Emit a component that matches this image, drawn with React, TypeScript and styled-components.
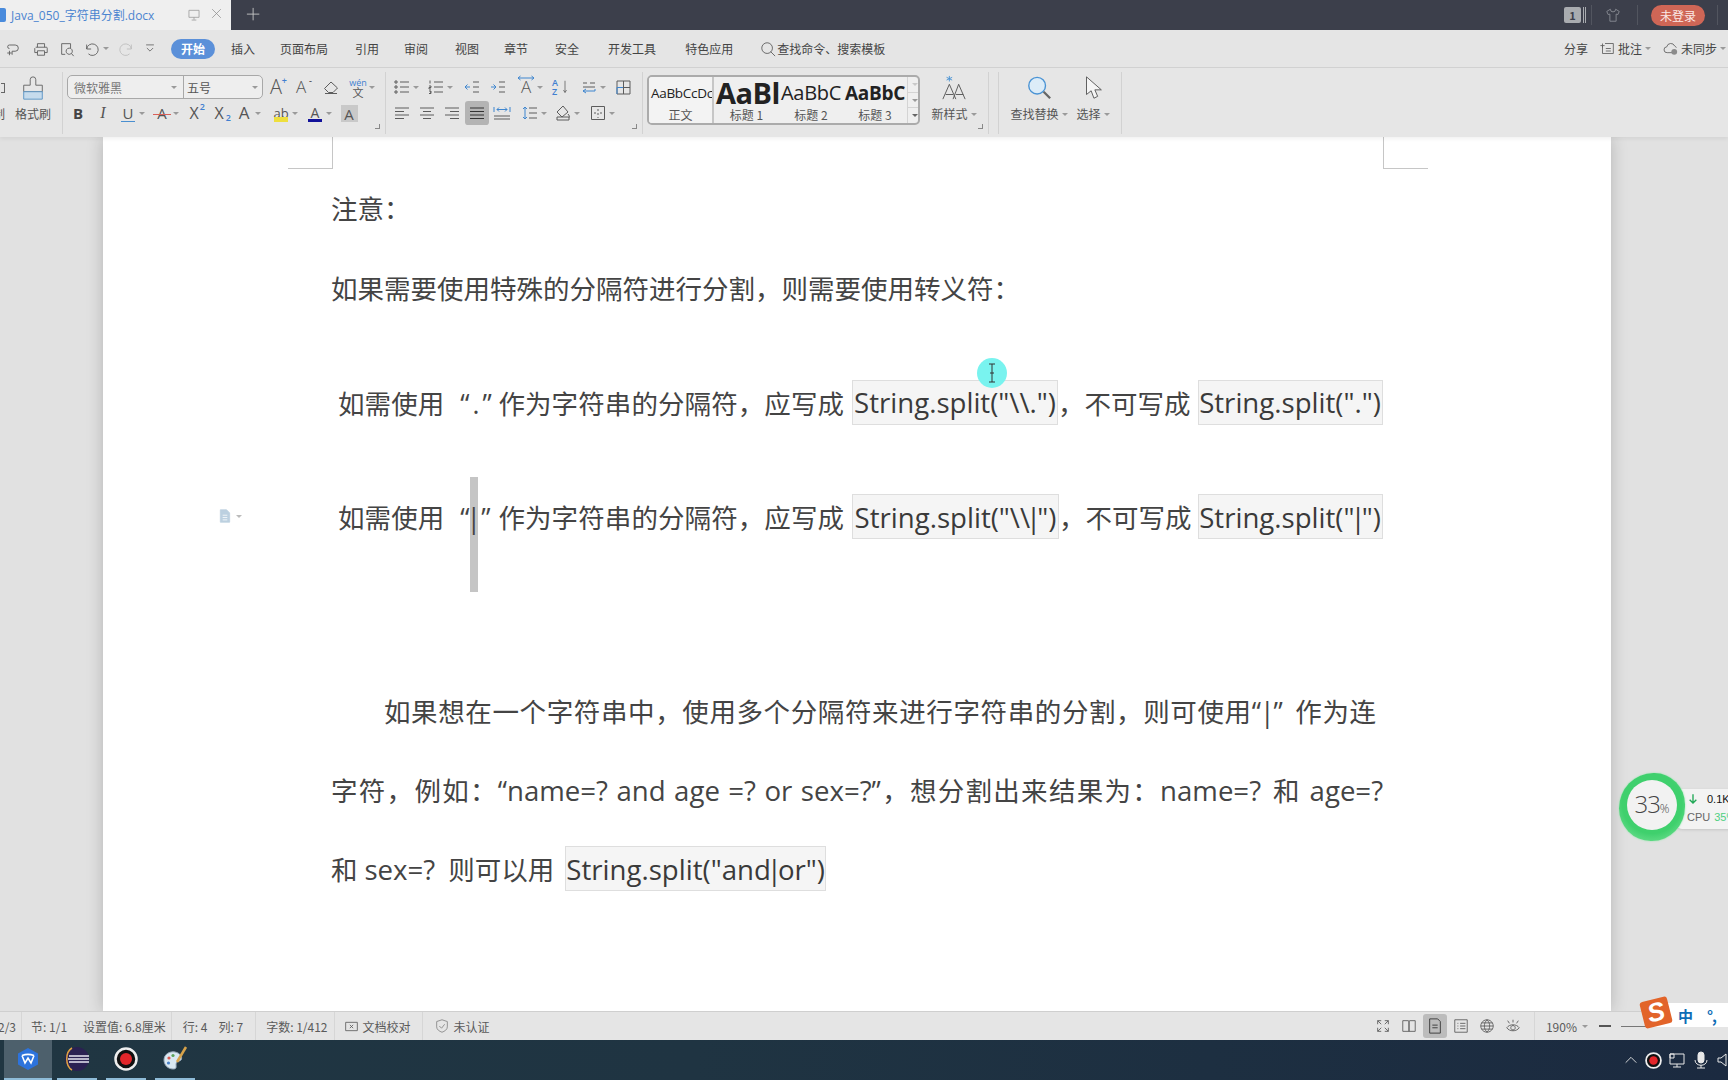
import React from 'react';
import styled, { createGlobalStyle } from 'styled-components';

const uiFont = '"Noto Sans CJK SC", "Noto Sans", sans-serif';
const docFont = '"Open Sans", "Noto Sans CJK SC", sans-serif';

const COMMA = '\uFF0C';
const COLON = '\uFF1A';

const GlobalStyle = createGlobalStyle`
  html, body { margin: 0; padding: 0; background: #e1e1e1; }
  * { box-sizing: border-box; }
`;

const Root = styled.div`
  position: relative;
  width: 1728px;
  height: 1080px;
  overflow: hidden;
  display: flex;
  flex-direction: column;
  font-family: ${uiFont};
  font-size: 12px;
  color: #444;
`;

/* title bar */
const TitleBar = styled.div`
  height: 30px;
  flex: none;
  display: flex;
  align-items: center;
  background: #3c3f4b;
`;
const DocTab = styled.div`
  width: 231px;
  height: 30px;
  display: flex;
  align-items: center;
  background: #efefef;
  color: #4b84d0;
`;
const DocBadge = styled.div`
  width: 6px;
  height: 14px;
  background: #4a8bdc;
  border-radius: 0 2px 2px 0;
`;
const DocName = styled.span`
  margin-left: 5px;
  width: 176px;
  font-family: "Open Sans", "Noto Sans CJK SC", sans-serif;
  white-space: nowrap;
`;
const PlusBtn = styled.div`
  margin-left: 15px;
  width: 16px;
  height: 16px;
  display: flex;
`;
const TitleRight = styled.div`
  margin-left: auto;
  display: flex;
  align-items: center;
  padding-right: 10px;
`;
const CountBadge = styled.div`
  width: 17px;
  height: 16px;
  border-radius: 2px;
  background: #a9acb0;
  color: #3c3f4b;
  font-size: 11px;
  font-weight: 700;
  line-height: 16px;
  text-align: center;
`;
const BadgeEdge = styled.div`
  margin-left: 2px;
  width: 3px;
  height: 16px;
  border-left: 1px solid #a9acb0;
  border-right: 1px solid #a9acb0;
`;
const TitleSep = styled.div<{ $ml: number }>`
  margin-left: ${p => p.$ml}px;
  width: 1px;
  height: 20px;
  background: #52555f;
`;
const LoginPill = styled.div`
  margin-left: 13px;
  width: 54px;
  height: 21px;
  border-radius: 11px;
  background: #cf6656;
  color: #fbe9e6;
  font-size: 12px;
  line-height: 21px;
  text-align: center;
`;

/* menu bar */
const MenuBar = styled.div`
  height: 38px;
  flex: none;
  display: flex;
  align-items: center;
  background: #e5e5e5;
  border-bottom: 1px solid #d2d2d2;
  white-space: nowrap;
`;
const QuickIcon = styled.div<{ $ml: number }>`
  margin-left: ${p => p.$ml}px;
  width: 16px;
  height: 16px;
  display: flex;
`;
const ActivePill = styled.div`
  margin-left: 12px;
  width: 44px;
  height: 20px;
  border-radius: 10px;
  background: #5b90d9;
  color: #fff;
  font-weight: 700;
  line-height: 20px;
  text-align: center;
`;
const MenuTab = styled.span<{ $ml: number }>`
  margin-left: ${p => p.$ml}px;
  color: #444;
`;
const MenuRight = styled.div`
  margin-left: auto;
  display: flex;
  align-items: center;
  padding-right: 2px;
`;
const MenuAction = styled.span<{ $ml?: number }>`
  margin-left: ${p => p.$ml ?? 0}px;
  display: inline-flex;
  align-items: center;
  gap: 3px;
`;

/* ribbon */
const Ribbon = styled.div`
  height: 69px;
  flex: none;
  display: flex;
  background: #e6e6e6;
  position: relative;
  z-index: 2;
  box-shadow: 0 2px 4px rgba(0, 0, 0, 0.06);
`;
const Group = styled.div<{ $w: number; $sep?: boolean }>`
  position: relative;
  width: ${p => p.$w}px;
  flex: none;
  padding-top: 7px;
  display: flex;
  flex-direction: column;
  gap: 2px;
  &::after {
    content: '';
    display: ${p => (p.$sep === false ? 'none' : 'block')};
    position: absolute;
    right: 0;
    top: 4px;
    bottom: 3px;
    width: 1px;
    background: #d2d2d2;
  }
`;
const ToolRow = styled.div`
  height: 24px;
  display: flex;
  align-items: center;
`;
const Tool = styled.div<{ $ml: number; $active?: boolean }>`
  margin-left: ${p => p.$ml}px;
  width: 18px;
  height: 18px;
  flex: none;
  display: flex;
  align-items: center;
  justify-content: center;
  position: relative;
  border-radius: 1px;
  ${p => p.$active && 'background: #b4b4b4; box-shadow: 0 0 0 3px #b4b4b4;'}
`;
const OverIcon = styled.div`
  position: absolute;
  left: 0;
  top: -5px;
`;
const Caret = styled.i<{ $ml?: number; $c?: string }>`
  flex: none;
  display: block;
  margin-left: ${p => p.$ml ?? 0}px;
  width: 0;
  height: 0;
  border-left: 3px solid transparent;
  border-right: 3px solid transparent;
  border-top: 3px solid ${p => p.$c ?? '#9a9a9a'};
`;
const LetterGlyph = styled.span<{ $size?: number; $color?: string; $weight?: number; $italic?: boolean; $font?: string }>`
  font-family: ${p => p.$font ?? '"Open Sans", sans-serif'};
  font-size: ${p => p.$size ?? 17}px;
  font-weight: ${p => p.$weight ?? 400};
  font-style: ${p => (p.$italic ? 'italic' : 'normal')};
  color: ${p => p.$color ?? '#555'};
  line-height: 18px;
`;
const SupMark = styled.span<{ $sub?: boolean; $color?: string }>`
  position: absolute;
  right: ${p => (p.$sub ? -3 : -2)}px;
  top: ${p => (p.$sub ? 9 : -2)}px;
  font-size: 9px;
  line-height: 10px;
  color: ${p => p.$color ?? '#3f7fd0'};
  font-family: "Open Sans", sans-serif;
  font-weight: 600;
`;
const Underlined = styled.span<{ $color: string; $h: number }>`
  position: absolute;
  left: 2px;
  right: 2px;
  bottom: 0;
  height: ${p => p.$h}px;
  background: ${p => p.$color};
`;
const StrikeLine = styled.span`
  position: absolute;
  left: 0;
  right: 0;
  top: 10px;
  height: 1px;
  background: #d9605a;
`;
const GrayA = styled.div`
  width: 17px;
  height: 17px;
  background: #c9c9c9;
  text-align: center;
  line-height: 16px;
`;
const PinyinWrap = styled.div`
  display: flex;
  flex-direction: column;
  align-items: center;
  line-height: 9px;
`;
const PinyinTop = styled.span`
  font-family: "Open Sans", sans-serif;
  font-size: 9px;
  line-height: 9px;
  color: #3f7fd0;
`;
const PinyinBottom = styled.span`
  font-size: 11px;
  line-height: 10px;
  color: #555;
`;
const SortStack = styled.div`
  display: flex;
  flex-direction: column;
  width: 9px;
  font-family: "Open Sans", sans-serif;
  font-size: 9px;
  font-weight: 600;
  line-height: 9px;
  color: #3f7fd0;
`;
const FontBox = styled.div`
  margin-left: 4px;
  width: 196px;
  height: 24px;
  border: 1px solid #a8a8a8;
  border-radius: 5px;
  background: #eeeeee;
  display: flex;
  align-items: center;
`;
const FontName = styled.div`
  width: 116px;
  height: 100%;
  padding: 0 6px;
  display: flex;
  align-items: center;
  justify-content: space-between;
  border-right: 1px solid #a8a8a8;
  color: #777;
`;
const FontSize = styled.div`
  flex: 1;
  padding: 0 4px 0 3px;
  display: flex;
  align-items: center;
  justify-content: space-between;
  color: #555;
`;
const Launcher = styled.i`
  position: absolute;
  right: 6px;
  bottom: 8px;
  width: 5px;
  height: 5px;
  border-right: 1px solid #888;
  border-bottom: 1px solid #888;
`;
const BigTools = styled.div`
  display: flex;
  height: 100%;
`;
const BigTool = styled.div<{ $w: number; $ml?: number }>`
  width: ${p => p.$w}px;
  margin-left: ${p => p.$ml ?? 0}px;
  flex: none;
  display: flex;
  flex-direction: column;
  align-items: center;
  color: #555;
  white-space: nowrap;
`;
const BigIcon = styled.div`
  height: 26px;
  display: flex;
  align-items: center;
  justify-content: center;
`;
const BigLabel = styled.div`
  margin-top: 4px;
  height: 18px;
  line-height: 18px;
  display: flex;
  align-items: center;
  gap: 3px;
`;
const ClippedLeft = styled.div`
  width: 5px;
  flex: none;
  overflow: hidden;
  display: flex;
  flex-direction: column;
  align-items: flex-end;
  color: #555;
  white-space: nowrap;
`;
const ClippedIcon = styled.i`
  display: block;
  width: 4px;
  height: 10px;
  margin: 8px 0 8px;
  border: 1px solid #666;
  border-left: none;
`;
const ClippedWord = styled.span`
  margin-top: 4px;
  line-height: 18px;
`;
const Gallery = styled.div`
  margin-left: 4px;
  width: 273px;
  height: 50px;
  flex: none;
  border: 2px solid #ababab;
  border-radius: 5px;
  background: #efefef;
  display: flex;
  overflow: hidden;
`;
const StyleCard = styled.div<{ $w: number; $active?: boolean }>`
  width: ${p => p.$w}px;
  flex: none;
  display: flex;
  flex-direction: column;
  align-items: center;
  overflow: hidden;
  background: ${p => (p.$active ? '#f3f3f3' : 'transparent')};
  ${p => p.$active && 'border-right: 2px solid #c6c6c6;'}
`;
const StylePreview = styled.div<{ $size: number; $bold?: boolean }>`
  height: 28px;
  margin-top: 2px;
  width: 100%;
  overflow: hidden;
  font-family: "Open Sans", sans-serif;
  font-size: ${p => p.$size}px;
  font-weight: ${p => (p.$bold ? 700 : 400)};
  line-height: 28px;
  color: #222;
  white-space: nowrap;
  text-align: left;
  padding-left: 2px;
  letter-spacing: ${p => (p.$size > 20 ? -0.5 : -0.3)}px;
`;
const StyleName = styled.div`
  font-size: 12px;
  line-height: 16px;
  color: #555;
`;
const GalleryScroll = styled.div`
  margin-left: auto;
  width: 14px;
  flex: none;
  display: flex;
  flex-direction: column;
  border-left: 1px solid #d4d4d4;
`;
const ScrollBtn = styled.div`
  flex: 1;
  display: flex;
  align-items: center;
  justify-content: center;
  border-bottom: 1px solid #d4d4d4;
  &:last-child { border-bottom: none; }
`;

/* document */
const DocArea = styled.div`
  flex: 1;
  min-height: 0;
  background: #e1e1e1;
  padding-left: 103px;
`;
const Page = styled.div`
  position: relative;
  width: 1508px;
  height: 100%;
  padding: 30px 0 0 228px;
  background: #fff;
  box-shadow: 0 0 16px rgba(0, 0, 0, 0.2);
  font-family: ${docFont};
  font-size: 26.5px;
  color: #444;
  clip-path: inset(0 -30px 0 -30px);
`;
const CropMark = styled.div<{ $side: 'left' | 'right' }>`
  position: absolute;
  top: 0;
  left: ${p => (p.$side === 'left' ? 185 : 1280)}px;
  width: 45px;
  height: 32px;
  border-bottom: 1px solid #c6c6c6;
  ${p => (p.$side === 'left' ? 'border-right' : 'border-left')}: 1px solid #c6c6c6;
`;
const Line = styled.div<{ $h: number; $mt?: number; $indent?: number }>`
  position: relative;
  isolation: isolate;
  width: 1052px;
  height: ${p => p.$h}px;
  margin-top: ${p => p.$mt ?? 0}px;
  padding-left: ${p => p.$indent ?? 0}px;
  display: flex;
  align-items: center;
  white-space: nowrap;
`;
const Code = styled.span<{ $w: number; $ml?: number }>`
  flex: none;
  display: inline-flex;
  align-items: center;
  justify-content: center;
  width: ${p => p.$w}px;
  height: 45px;
  margin-left: ${p => p.$ml ?? 0}px;
  background: #f5f5f5;
  border: 1px solid #dedede;
  color: #3a3a3a;
  font-size: 27.6px;
`;
const Spaced = styled.span<{ $ml?: number; $w?: number }>`
  flex: none;
  margin-left: ${p => p.$ml ?? 0}px;
  ${p => p.$w && `width: ${p.$w}px; text-align: justify; text-align-last: justify;`}
`;
const Latin = styled.span`
  font-size: 27.6px;
`;
const SpacedWord = styled.span`
  display: inline-block;
  margin: 0 10px 0 12px;
`;
const Quoted = styled.span<{ $w?: number; $ml?: number }>`
  display: inline-block;
  width: ${p => p.$w ?? 38}px;
  margin: 0 0 0 ${p => p.$ml ?? 16}px;
  text-align: left;
  text-align-last: left;
  letter-spacing: 3px;
`;
const Pipe = styled.span`
  display: inline-block;
  margin: 0 -4px;
`;
const CaretMark = styled.span`
  position: relative;
  display: inline-block;
  margin: 0 -3px 0 -6px;
  &::before {
    content: '';
    position: absolute;
    z-index: -1;
    left: 3px;
    top: -23px;
    width: 8px;
    height: 115px;
    background: #c5c5c5;
  }
`;
const ParaIcon = styled.div`
  position: absolute;
  left: 115px;
  top: 372px;
  display: flex;
  align-items: center;
  gap: 4px;
`;

/* status bar */
const StatusBar = styled.div`
  height: 29px;
  flex: none;
  position: relative;
  display: flex;
  align-items: center;
  background: #e5e5e5;
  border-top: 1px solid #cfcfcf;
  color: #5a5a5a;
  white-space: nowrap;
`;
const StatusText = styled.span<{ $ml?: number }>`
  margin-left: ${p => p.$ml ?? 0}px;
  display: inline-flex;
  align-items: center;
  gap: 4px;
`;
const StatusSep = styled.i<{ $ml: number }>`
  margin-left: ${p => p.$ml}px;
  width: 1px;
  height: 28px;
  background: #d6d6d6;
`;
const ClipStart = styled.div`
  width: 16px;
  overflow: hidden;
  display: flex;
  justify-content: flex-end;
`;
const StatusRight = styled.div`
  margin-left: auto;
  display: flex;
  align-items: center;
`;
const ViewBtn = styled.div<{ $ml: number; $active?: boolean }>`
  margin-left: ${p => p.$ml}px;
  width: 24px;
  height: 24px;
  border-radius: 3px;
  display: flex;
  align-items: center;
  justify-content: center;
  background: ${p => (p.$active ? '#bcbcbc' : 'transparent')};
`;
const ZoomMinus = styled.i`
  margin-left: 11px;
  width: 12px;
  height: 2px;
  background: #555;
`;
const ZoomTrack = styled.i`
  margin-left: 10px;
  width: 107px;
  height: 1px;
  background: #777;
`;

/* taskbar */
const TaskBar = styled.div`
  height: 40px;
  flex: none;
  display: flex;
  align-items: center;
  background: linear-gradient(90deg, #203642 0%, #1f3442 40%, #1b2a40 100%);
`;
const TaskItem = styled.div<{ $w: number; $ml: number; $active?: boolean }>`
  width: ${p => p.$w}px;
  margin-left: ${p => p.$ml}px;
  height: 40px;
  display: flex;
  align-items: center;
  justify-content: center;
  background: ${p => (p.$active ? '#4d606c' : 'transparent')};
  border-bottom: 2px solid #8fbcd8;
`;
const Tray = styled.div`
  margin-left: auto;
  margin-right: -6px;
  display: flex;
  align-items: center;
  gap: 6px;
`;

/* floating things */
const CursorHalo = styled.div`
  position: absolute;
  left: 977px;
  top: 358px;
  width: 30px;
  height: 30px;
  border-radius: 50%;
  background: #79f3ef;
  display: flex;
  align-items: center;
  justify-content: center;
  z-index: 5;
`;
const Meter = styled.div`
  position: absolute;
  left: 1619px;
  top: 773px;
  z-index: 5;
  width: 66px;
  height: 68px;
  border-radius: 52% 46% 50% 48%;
  background: radial-gradient(circle at 50% 45%, #3fd06d 60%, #8ae8a5 100%);
  box-shadow: 0 0 2px #8ae8a5;
  display: flex;
  align-items: center;
  justify-content: center;
`;
const MeterFace = styled.div`
  width: 50px;
  height: 50px;
  margin-top: -4px;
  border-radius: 50%;
  background: #f2f2f2;
  color: #444;
  font-size: 24px;
  letter-spacing: -1px;
  font-family: "Open Sans", sans-serif;
  font-weight: 300;
  display: flex;
  align-items: baseline;
  justify-content: center;
  line-height: 48px;
`;
const MeterPct = styled.span`
  font-size: 12px;
  letter-spacing: 0;
`;
const MeterPanel = styled.div`
  position: absolute;
  left: 1676px;
  top: 789px;
  z-index: 4;
  width: 70px;
  height: 40px;
  border-radius: 6px;
  background: #f3f3f3;
  box-shadow: 0 1px 3px rgba(0, 0, 0, 0.12);
  padding: 1px 0 0 11px;
  font-family: "Liberation Sans", sans-serif;
  font-size: 11px;
  line-height: 18px;
  color: #666;
  white-space: nowrap;
`;
const MeterRow = styled.div`
  display: flex;
  align-items: center;
`;
const NetValue = styled.span`
  margin-left: 8px;
  color: #111;
`;
const CpuValue = styled.span`
  margin-left: 4px;
  color: #4fd081;
`;
const ImeBar = styled.div`
  position: absolute;
  left: 1654px;
  top: 1003px;
  z-index: 6;
  width: 74px;
  height: 24px;
  background: #fff;
  display: flex;
  align-items: center;
  padding-left: 24px;
  color: #0e6db6;
`;
const ImeLogo = styled.div`
  position: absolute;
  left: 1642px;
  top: 999px;
  z-index: 7;
  width: 28px;
  height: 27px;
  border-radius: 3px;
  transform: rotate(-14deg);
  background: #e2642a;
  display: flex;
  align-items: center;
  justify-content: center;
  color: #fff;
  font-family: "Liberation Sans", sans-serif;
  font-size: 26px;
  font-weight: 700;
  font-style: italic;
  line-height: 27px;
`;
const ImeChar = styled.span`
  font-size: 15px;
  font-weight: 700;
`;
const ImePunct = styled.span`
  margin-left: 14px;
  font-size: 15px;
  font-weight: 700;
  line-height: 15px;
  letter-spacing: -1px;
`;

const Svg = styled.svg<{ $s?: number }>`
  width: ${p => p.$s ?? 18}px;
  height: ${p => p.$s ?? 18}px;
  flex: none;
  display: block;
  fill: none;
  stroke: #5c5c5c;
  stroke-width: 1;
`;

const Ico = ({ d, s, color, blue }: { d: string; s?: number; color?: string; blue?: string }) => (
  <Svg viewBox="0 0 18 18" $s={s}>
    <path d={d} stroke={color} />
    {blue && <path d={blue} stroke="#3f86cf" />}
  </Svg>
);

const P = {
  save: 'M5 8.5a2 2 0 1 1 0-4M5 4.5h6.5a3.5 3.5 0 0 1 0 7H8v4M5 16l0-5M2.5 13.5h5',
  print: 'M5 7V3h8v4M3 7h12a1 1 0 0 1 1 1v5h-3M5 13H2V8M5 11h8v5H5z',
  preview: 'M13 8V3H3v12h4M11.5 8a3.5 3.5 0 1 0 .01 0M14 14l2.5 3',
  undo: 'M3 4v5h5M3 9a6.5 6.5 0 1 1 2 5.5',
  redo: 'M15 4v5h-5M15 9a6.5 6.5 0 1 0-2 5.5',
  more: 'M4 5h10M5 9l4 4 4-4',
  note: 'M6 3h10v12H3V6M3 3v5M0.5 5.5h5M7 9h6M7 12h6',
  cloud: 'M11 14H5a3.5 3.5 0 0 1-.5-7A5 5 0 0 1 14 6a3.5 3.5 0 0 1 2 2',
  shirt: 'M6 2.5 2 5l1.5 3.5L5.500 8v8h7V8l2 .5L16 5l-4-2.500a3 3 0 0 1-6 0z',
  monitor: 'M2.500 3h13v9h-13zM9 12v3M6 15.500h6',
  close: 'M3 3l12 12M15 3 3 15',
  plus: 'M8 1v14M1 8h14',
  list: 'M7 4h9M7 9h9M7 14h9M2 3h2v2H2zM2 8h2v2H2zM2 13h2v2H2z',
  numbered: 'M7 4h9M7 9h9M7 14h9M3 2.500v3M2 8h2v1.500H2V11h2M2 13h2v1h-1h1v1.500H2',
  alignL: 'M2 4h14M2 7.500h9M2 11h14M2 14.500h9',
  alignC: 'M2 4h14M5 7.500h8M2 11h14M5 14.500h8',
  alignR: 'M2 4h14M7 7.500h9M2 11h14M7 14.500h9',
  justify: 'M2 4h14M2 7.500h14M2 11h14M2 14.500h14',
  dist: 'M1 12h16M1 15h16',
  spacingLines: 'M8 4h8M8 9h8M8 14h8',
  outdentLines: 'M10 4h6M10 9h6M10 14h6',
  gridDash: 'M2.500 2.500h13v13h-13zM9 5v2M9 9v2M9 13v1M5 9h2M11 9h2',
  eraser: 'M2.500 10.500 9 4l6.500 6-4.500 4.500H6.500zM3 15.500h12',
  fill: 'M9 2 3 8l5 5 6-5zM14 10c1 1.500 2 2.500 1.200 3.500M3 13h12v3H3z',
};

const Brush = () => (
  <Svg viewBox="0 0 28 28" $s={26}>
    <path d="M11 11V5a3 3 0 0 1 6 0v6h7v7H4v-7z" stroke="#666" />
    <path d="M4 18h20v8H4z" fill="#c6dbec" stroke="#5a94c6" />
  </Svg>
);

const Lens = () => (
  <Svg viewBox="0 0 28 28" $s={26}>
    <circle cx="12" cy="11.500" r="9" fill="#dcecf8" stroke="#4a93d4" strokeWidth="1.500" />
    <path d="M19 18l7 7" stroke="#666" strokeWidth="2.500" />
  </Svg>
);

const Pointer = () => (
  <Svg viewBox="0 0 28 28" $s={26}>
    <path d="M7 2v19l5-4 3 8 4-2-3-7h7z" fill="#f5f5f5" stroke="#555" />
  </Svg>
);

const StylesIcon = () => (
  <Svg viewBox="0 0 28 28" $s={26}>
    <path d="M2 26 9 10l7 16M5 21h8M13 26l6-16 7 16M16 21h8" stroke="#555" />
    <path d="M9 1v6M6 2.500l6 3M12 2.500l-6 3" stroke="#4a93d4" />
  </Svg>
);

const CloudIcon = () => (
  <Svg viewBox="0 0 18 18" $s={15}>
    <path d={P.cloud} />
    <circle cx="13.500" cy="13" r="3.500" fill="#8b8b8b" stroke="none" />
  </Svg>
);

const WpsLogo = () => (
  <Svg viewBox="0 0 24 24" $s={24}>
    <path d="M12 1 22 6.500v11L12 23 2 17.500v-11z" fill="#2d73dc" stroke="none" />
    <path d="M6 8.500 9 16l3-5 3 5 3-7.500M6 8.500c4-1.500 8-1.500 12 0" stroke="#fff" strokeWidth="1.600" />
  </Svg>
);

const EclipseLogo = () => (
  <Svg viewBox="0 0 26 26" $s={26}>
    <circle cx="13" cy="13" r="12" fill="#2a2152" stroke="none" />
    <path d="M8 2C1 6 1 20 8 24" stroke="#e0a341" strokeWidth="1.500" />
    <path d="M5 10h20M4 13h21M5 16h20" stroke="#e8e6f2" strokeWidth="1.400" />
  </Svg>
);

const RecordLogo = ({ s = 24 }: { s?: number }) => (
  <Svg viewBox="0 0 24 24" $s={s}>
    <circle cx="12" cy="12" r="10.500" fill="#111" stroke="#eee" strokeWidth="2.500" />
    <circle cx="12" cy="12" r="6" fill="#e3262a" stroke="none" />
  </Svg>
);

const PaletteLogo = () => (
  <Svg viewBox="0 0 26 26" $s={26}>
    <path d="M2 14c0-6 6-9 11-8 5 1 8 5 6 8-2 2-5 1-5 4s1 5-3 5c-5 0-9-4-9-9z" fill="#d9e8f2" stroke="#9ab" />
    <circle cx="7" cy="12" r="1.600" fill="#d85a50" stroke="none" />
    <circle cx="11" cy="9.500" r="1.600" fill="#5aa35a" stroke="none" />
    <circle cx="6.500" cy="17" r="1.600" fill="#4a82c8" stroke="none" />
    <path d="M24 1l-9 15" stroke="#d6a24a" strokeWidth="2.500" />
  </Svg>
);

const IBeam = () => (
  <Svg viewBox="0 0 12 20" $s={20}>
    <path d="M3 1h6M6 1v18M3 19h6M4 10h4" stroke="#333" />
  </Svg>
);

const Launch = () => <Launcher />;

const menuTabs: [string, number][] = [
  ['插入', 16],
  ['页面布局', 25],
  ['引用', 27],
  ['审阅', 25],
  ['视图', 27],
  ['章节', 25],
  ['安全', 27],
  ['开发工具', 29],
  ['特色应用', 29],
];

export default function App() {
  return (
    <Root>
      <GlobalStyle />
      <TitleBar>
        <DocTab>
          <DocBadge />
          <DocName>Java_050_字符串分割.docx</DocName>
          <Ico d={P.monitor} s={14} color="#999" />
          <QuickIcon $ml={9}>
            <Ico d={P.close} s={13} color="#888" />
          </QuickIcon>
        </DocTab>
        <PlusBtn>
          <Ico d={P.plus} s={16} color="#c8c8c8" />
        </PlusBtn>
        <TitleRight>
          <CountBadge>1</CountBadge>
          <BadgeEdge />
          <TitleSep $ml={5} />
          <QuickIcon $ml={13}>
            <Ico d={P.shirt} s={16} color="#8a8d95" />
          </QuickIcon>
          <TitleSep $ml={16} />
          <LoginPill>未登录</LoginPill>
          <TitleSep $ml={12} />
        </TitleRight>
      </TitleBar>

      <MenuBar>
        <QuickIcon $ml={5}>
          <Ico d={P.save} s={16} />
        </QuickIcon>
        <QuickIcon $ml={12}>
          <Ico d={P.print} s={16} />
        </QuickIcon>
        <QuickIcon $ml={10}>
          <Ico d={P.preview} s={16} />
        </QuickIcon>
        <QuickIcon $ml={9}>
          <Ico d={P.undo} s={16} />
        </QuickIcon>
        <Caret $ml={3} />
        <QuickIcon $ml={9}>
          <Ico d={P.redo} s={16} color="#bdbdbd" />
        </QuickIcon>
        <QuickIcon $ml={9}>
          <Ico d={P.more} s={14} />
        </QuickIcon>
        <ActivePill>开始</ActivePill>
        {menuTabs.map(([label, ml]) => (
          <MenuTab key={label} $ml={ml}>
            {label}
          </MenuTab>
        ))}
        <QuickIcon $ml={27}>
          <Svg viewBox="0 0 18 18" $s={16}>
            <circle cx="8" cy="8" r="6" />
            <path d="M12 12l5 5" />
          </Svg>
        </QuickIcon>
        <MenuTab $ml={1}>查找命令、搜索模板</MenuTab>
        <MenuRight>
          <MenuAction>分享</MenuAction>
          <MenuAction $ml={12}>
            <Ico d={P.note} s={15} />
            批注
            <Caret />
          </MenuAction>
          <MenuAction $ml={12}>
            <CloudIcon />
            未同步
            <Caret />
          </MenuAction>
        </MenuRight>
      </MenuBar>

      <Ribbon>
        <Group $w={63}>
          <BigTools>
            <ClippedLeft>
              <ClippedIcon />
              <ClippedWord>复制</ClippedWord>
            </ClippedLeft>
            <BigTool $w={36} $ml={10}>
              <BigIcon>
                <Brush />
              </BigIcon>
              <BigLabel>格式刷</BigLabel>
            </BigTool>
          </BigTools>
        </Group>

        <Group $w={323}>
          <ToolRow>
            <FontBox>
              <FontName>
                微软雅黑
                <Caret />
              </FontName>
              <FontSize>
                五号
                <Caret />
              </FontSize>
            </FontBox>
            <Tool $ml={4}>
              <LetterGlyph $size={20} $weight={300}>A</LetterGlyph>
              <SupMark>+</SupMark>
            </Tool>
            <Tool $ml={7}>
              <LetterGlyph $size={17} $weight={300}>A</LetterGlyph>
              <SupMark $color="#555">-</SupMark>
            </Tool>
            <Tool $ml={12}>
              <Ico d={P.eraser} />
            </Tool>
            <Tool $ml={9}>
              <PinyinWrap>
                <PinyinTop>wén</PinyinTop>
                <PinyinBottom>文</PinyinBottom>
              </PinyinWrap>
            </Tool>
            <Caret $ml={2} />
          </ToolRow>
          <ToolRow>
            <Tool $ml={6}>
              <LetterGlyph $size={15} $weight={700} $color="#444">
                B
              </LetterGlyph>
            </Tool>
            <Tool $ml={7}>
              <LetterGlyph $size={16} $italic $font="'Liberation Serif', serif">
                I
              </LetterGlyph>
            </Tool>
            <Tool $ml={7}>
              <LetterGlyph $size={15}>U</LetterGlyph>
              <Underlined $color="#4a8fd0" $h={1} />
            </Tool>
            <Caret $ml={2} />
            <Tool $ml={8}>
              <LetterGlyph $size={15}>A</LetterGlyph>
              <StrikeLine />
            </Tool>
            <Caret $ml={2} />
            <Tool $ml={6}>
              <LetterGlyph $size={16}>X</LetterGlyph>
              <SupMark>2</SupMark>
            </Tool>
            <Tool $ml={7}>
              <LetterGlyph $size={16}>X</LetterGlyph>
              <SupMark $sub>2</SupMark>
            </Tool>
            <Tool $ml={7}>
              <LetterGlyph $size={17}>A</LetterGlyph>
            </Tool>
            <Caret $ml={2} />
            <Tool $ml={11}>
              <LetterGlyph $size={13}>ab</LetterGlyph>
              <Underlined $color="#eedf3e" $h={5} />
            </Tool>
            <Caret $ml={2} />
            <Tool $ml={8}>
              <LetterGlyph $size={14}>A</LetterGlyph>
              <Underlined $color="#12129a" $h={3} />
            </Tool>
            <Caret $ml={2} />
            <Tool $ml={8}>
              <GrayA>
                <LetterGlyph $size={15}>A</LetterGlyph>
              </GrayA>
            </Tool>
          </ToolRow>
          <Launch />
        </Group>

        <Group $w={257}>
          <ToolRow>
            <Tool $ml={7}>
              <Ico d={P.list} />
            </Tool>
            <Caret $ml={2} />
            <Tool $ml={8}>
              <Ico d={P.numbered} />
            </Tool>
            <Caret $ml={2} />
            <Tool $ml={10}>
              <Ico d={P.outdentLines} blue="M7 9H2M4.500 6.500 2 9l2.500 2.500" />
            </Tool>
            <Tool $ml={8}>
              <Ico d={P.outdentLines} blue="M2 9h5M4.500 6.500 7 9l-2.500 2.500" />
            </Tool>
            <Tool $ml={10}>
              <LetterGlyph $size={17} $weight={300}>A</LetterGlyph>
              <OverIcon>
                <Ico d="" blue="M1 5h16M3.500 3 1 5l2.500 2M14.500 3 17 5l-2.500 2" />
              </OverIcon>
            </Tool>
            <Caret $ml={2} />
            <Tool $ml={10}>
              <SortStack>
                <span>A</span>
                <span>Z</span>
              </SortStack>
              <Svg viewBox="0 0 6 18" $s={14}>
                <path d="M3 1v15M1 13l2 3 2-3" />
              </Svg>
            </Tool>
            <Tool $ml={9}>
              <Ico d="M3 5h4M10 5h5M3 9h12" blue="M3 13h12v-2M6 11l-3 2 3 2" />
            </Tool>
            <Caret $ml={2} />
            <Tool $ml={8}>
              <Ico d="M3 3h13v13H3zM3 9.500h13M9.500 3v13" blue="M3 9.500v6.500M3 9.500h6" />
            </Tool>
          </ToolRow>
          <ToolRow>
            <Tool $ml={7}>
              <Ico d={P.alignL} />
            </Tool>
            <Tool $ml={7}>
              <Ico d={P.alignC} />
            </Tool>
            <Tool $ml={7}>
              <Ico d={P.alignR} />
            </Tool>
            <Tool $ml={7} $active>
              <Ico d={P.justify} color="#333" />
            </Tool>
            <Tool $ml={7}>
              <Ico d={P.dist} blue="M1 3v5M17 3v5M4 5.500h10M6 3.500l-2 2 2 2M12 3.500l2 2-2 2" />
            </Tool>
            <Tool $ml={10}>
              <Ico d={P.spacingLines} blue="M4 3v12M2 5l2-2 2 2M2 13l2 2 2-2" />
            </Tool>
            <Caret $ml={2} />
            <Tool $ml={7}>
              <Ico d={P.fill} />
            </Tool>
            <Caret $ml={2} />
            <Tool $ml={9}>
              <Ico d={P.gridDash} />
            </Tool>
            <Caret $ml={2} />
          </ToolRow>
          <Launch />
        </Group>

        <Group $w={346}>
          <BigTools>
            <Gallery>
              <StyleCard $w={65} $active>
                <StylePreview $size={13.5}>AaBbCcDc</StylePreview>
                <StyleName>正文</StyleName>
              </StyleCard>
              <StyleCard $w={65}>
                <StylePreview $size={29} $bold>
                  AaBl
                </StylePreview>
                <StyleName>标题 1</StyleName>
              </StyleCard>
              <StyleCard $w={64}>
                <StylePreview $size={20}>AaBbC</StylePreview>
                <StyleName>标题 2</StyleName>
              </StyleCard>
              <StyleCard $w={64}>
                <StylePreview $size={19} $bold>
                  AaBbC
                </StylePreview>
                <StyleName>标题 3</StyleName>
              </StyleCard>
              <GalleryScroll>
                <ScrollBtn>
                  <Caret $c="#c9c9c9" />
                </ScrollBtn>
                <ScrollBtn>
                  <Caret />
                </ScrollBtn>
                <ScrollBtn>
                  <Caret $c="#666" />
                </ScrollBtn>
              </GalleryScroll>
            </Gallery>
            <BigTool $w={50} $ml={9}>
              <BigIcon>
                <StylesIcon />
              </BigIcon>
              <BigLabel>
                新样式
                <Caret />
              </BigLabel>
            </BigTool>
          </BigTools>
          <Launch />
        </Group>

        <Group $w={10} />

        <Group $w={123}>
          <BigTools>
            <BigTool $w={68} $ml={6}>
              <BigIcon>
                <Lens />
              </BigIcon>
              <BigLabel>
                查找替换
                <Caret />
              </BigLabel>
            </BigTool>
            <BigTool $w={36} $ml={2}>
              <BigIcon>
                <Pointer />
              </BigIcon>
              <BigLabel>
                选择
                <Caret />
              </BigLabel>
            </BigTool>
          </BigTools>
        </Group>
      </Ribbon>

      <DocArea>
        <Page>
          <CropMark $side="left" />
          <CropMark $side="right" />
          <ParaIcon>
            <Svg viewBox="0 0 18 18" $s={14}>
              <path d="M3 1h8l4 4v12H3z" fill="#bcd0e0" stroke="#bcd0e0" />
              <path d="M6 8h6M6 11h6M6 14h6" stroke="#fff" />
            </Svg>
            <Caret $c="#bbb" />
          </ParaIcon>
          <Line $h={80}>注意{COLON}</Line>
          <Line $h={80}>如果需要使用特殊的分隔符进行分割{COMMA}则需要使用转义符{COLON}</Line>
          <Line $h={114} $mt={18} $indent={7}>
            <Spaced $w={506}>
              如需使用<Quoted>“.”</Quoted>作为字符串的分隔符{COMMA}应写成
            </Spaced>
            <Code $w={206} $ml={8}>
              String.split("\\.")
            </Code>
            <Spaced>{COMMA}不可写成</Spaced>
            <Code $w={185} $ml={7}>
              String.split(".")
            </Code>
          </Line>
          <Line $h={115} $indent={7}>
            <Spaced $w={506}>
              如需使用
              <Quoted>
                “<CaretMark>|</CaretMark>”
              </Quoted>
              作为字符串的分隔符{COMMA}应写成
            </Spaced>
            <Code $w={207} $ml={8}>
              String.split("\\<Pipe>|</Pipe>")
            </Code>
            <Spaced>{COMMA}不可写成</Spaced>
            <Code $w={185} $ml={6}>
              String.split("<Pipe>|</Pipe>")
            </Code>
          </Line>
          <Line $h={78} $mt={97} $indent={53}>
            <Spaced $w={992}>
              如果想在一个字符串中{COMMA}使用多个分隔符来进行字符串的分割{COMMA}则可使用
              <Quoted $w={43} $ml={0}>
                “<Pipe>|</Pipe>”
              </Quoted>
              作为连
            </Spaced>
          </Line>
          <Line $h={80}>
            <Spaced $w={1052}>
              字符{COMMA}例如{COLON}“<Latin>name=? and age =? or sex=?</Latin>”{COMMA}想分割出来结果为{COLON}
              <Latin>name=?</Latin>
              <SpacedWord>和</SpacedWord>
              <Latin>age=?</Latin>
            </Spaced>
          </Line>
          <Line $h={79}>
            <Spaced>
              和 <Latin>sex=?</Latin>
            </Spaced>
            <Spaced $ml={13}>则可以用</Spaced>
            <Code $w={261} $ml={11}>
              String.split("and<Pipe>|</Pipe>or")
            </Code>
          </Line>
        </Page>
      </DocArea>

      <StatusBar>
        <ClipStart>2/3</ClipStart>
        <StatusSep $ml={5} />
        <StatusText $ml={9}>节: 1/1</StatusText>
        <StatusText $ml={16}>设置值: 6.8厘米</StatusText>
        <StatusSep $ml={5} />
        <StatusText $ml={11}>行: 4</StatusText>
        <StatusText $ml={11}>列: 7</StatusText>
        <StatusSep $ml={12} />
        <StatusText $ml={10}>字数: 1/412</StatusText>
        <StatusSep $ml={6} />
        <StatusText $ml={9}>
          <Ico d="M2 4h14v10H2zM7 7l4 4M11 7l-4 4" s={15} />
          文档校对
        </StatusText>
        <StatusSep $ml={11} />
        <StatusText $ml={11}>
          <Ico d="M9 2 3 4v6c0 3 3 5 6 6 3-1 6-3 6-6V4zM6 9l2.500 2.500L12 7" s={16} color="#888" />
          未认证
        </StatusText>
        <StatusRight>
          <ViewBtn $ml={0}>
            <Ico d="M3 7V3h4M11 3h4v4M15 11v4h-4M7 15H3v-4M3 3l4 4M15 3l-4 4M15 15l-4-4M3 15l4-4" s={16} />
          </ViewBtn>
          <ViewBtn $ml={2}>
            <Ico d="M2 3h6a1 1 0 0 1 1 1v11H2zM16 3h-6a1 1 0 0 0-1 1v11h7z" s={16} />
          </ViewBtn>
          <ViewBtn $ml={2} $active>
            <Ico d="M3 1h9l3 3v13H3zM6 8h6M6 11h6" s={16} color="#333" />
          </ViewBtn>
          <ViewBtn $ml={2}>
            <Ico d="M2 2h14v14H2zM5 6h1M8 6h6M5 9h1M8 9h6M5 12h1M8 12h6" s={16} />
          </ViewBtn>
          <ViewBtn $ml={2}>
            <Ico d="M9 2a7 7 0 1 0 .01 0M2 9h14M9 2c-4 4-4 10 0 14M9 2c4 4 4 10 0 14M3 5.500h12M3 12.500h12" s={16} />
          </ViewBtn>
          <ViewBtn $ml={2}>
            <Ico d="M2 11c3-4.500 11-4.500 14 0-3 4.500-11 4.500-14 0zM9 8.500a2.500 2.500 0 1 0 .01 0M9 2v3M3 3l2 3M15 3l-2 3" s={16} />
          </ViewBtn>
          <StatusSep $ml={9} />
          <StatusText $ml={11}>190%</StatusText>
          <Caret $ml={5} />
          <ZoomMinus />
          <ZoomTrack />
        </StatusRight>
      </StatusBar>

      <TaskBar>
        <TaskItem $w={48} $ml={4} $active>
          <WpsLogo />
        </TaskItem>
        <TaskItem $w={40} $ml={5}>
          <EclipseLogo />
        </TaskItem>
        <TaskItem $w={40} $ml={9}>
          <RecordLogo />
        </TaskItem>
        <TaskItem $w={40} $ml={9}>
          <PaletteLogo />
        </TaskItem>
        <Tray>
          <Ico d="M3 12l6-6 6 6" s={16} color="#e8e8e8" />
          <RecordLogo s={17} />
          <Ico d="M2 3h14v10H2zM9 13v3M5 16h8M2 3h4v4H2z" s={18} color="#e8e8e8" />
          <Svg viewBox="0 0 18 18" $s={18}>
            <rect x="6" y="1" width="6" height="11" rx="3" fill="#e8e8e8" stroke="#e8e8e8" />
            <path d="M3 9c0 7 12 7 12 0M9 14v3M5 17h8" stroke="#e8e8e8" />
          </Svg>
          <Ico d="M2 7h3l5-4v12l-5-4H2zM13 6c1.500 2 1.500 4 0 6" s={18} color="#e8e8e8" />
        </Tray>
      </TaskBar>

      <CursorHalo>
        <IBeam />
      </CursorHalo>
      <MeterPanel>
        <MeterRow>
          <Svg viewBox="0 0 18 18" $s={12}>
            <path d="M9 2v13M4 10l5 5 5-5" stroke="#1fa855" strokeWidth="2" />
          </Svg>
          <NetValue>0.1K</NetValue>
        </MeterRow>
        <MeterRow>
          CPU
          <CpuValue>35%</CpuValue>
        </MeterRow>
      </MeterPanel>
      <Meter>
        <MeterFace>
          33<MeterPct>%</MeterPct>
        </MeterFace>
      </Meter>
      <ImeBar>
        <ImeChar>中</ImeChar>
        <ImePunct>°,</ImePunct>
      </ImeBar>
      <ImeLogo>S</ImeLogo>
    </Root>
  );
}
